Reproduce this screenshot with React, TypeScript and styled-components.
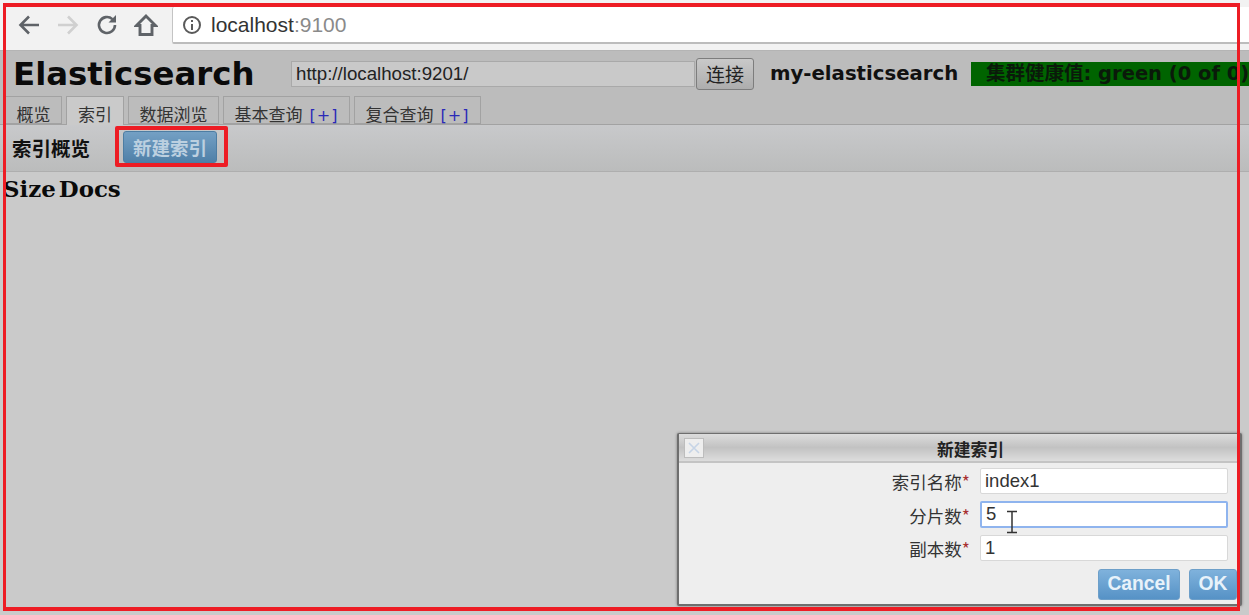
import React from 'react';
import styled, { createGlobalStyle } from 'styled-components';

const GlobalStyle = createGlobalStyle`
    html, body {
        margin: 0;
        padding: 0;
        height: 615px;
        overflow: hidden;
        background: #cacaca;
        font-family: "DejaVu Sans", "Noto Sans CJK SC", sans-serif;
    }
`;

const tabs = [
    { label: '概览', width: 57 },
    { label: '索引', width: 58, active: true },
    { label: '数据浏览', width: 91 },
    { label: '基本查询', width: 127, plus: true },
    { label: '复合查询', width: 127, plus: true },
];

const fields = [
    { label: '索引名称', value: 'index1' },
    { label: '分片数', value: '5', focused: true },
    { label: '副本数', value: '1' },
];

export default function App() {
    return (
        <Screen>
            <GlobalStyle />
            <BrowserBar>
                <NavIcons>
                    <svg width="24" height="24" viewBox="0 0 24 24" fill="none" stroke="#5f6368" strokeWidth="2.6">
                        <path d="M22 12H4M12 3.5L3.5 12l8.5 8.5" />
                    </svg>
                    <svg width="24" height="24" viewBox="0 0 24 24" fill="none" stroke="#d0d0d0" strokeWidth="2.6">
                        <path d="M2 12h18M12 3.5l8.5 8.5-8.5 8.5" />
                    </svg>
                    <svg width="24" height="24" viewBox="0 0 24 24" fill="none" stroke="#5f6368" strokeWidth="2.6">
                        <path d="M20 12a8 8 0 1 1-2.6-5.9" />
                        <path d="M21 2v7.5h-7.5z" fill="#5f6368" stroke="none" />
                    </svg>
                    <svg width="24" height="24" viewBox="0 0 24 24" fill="none" stroke="#5f6368" strokeWidth="2.9">
                        <path d="M2.5 12.5L12 3l9.5 9.5h-3.5v9H6v-9z" />
                    </svg>
                </NavIcons>
                <AddressBox>
                    <svg width="20" height="20" viewBox="0 0 20 20" fill="none" stroke="#5a5a5a" strokeWidth="2">
                        <circle cx="10" cy="10" r="8" />
                        <path d="M10 9v6M10 5v2" />
                    </svg>
                    <AddressText>localhost<AddressPort>:9100</AddressPort></AddressText>
                </AddressBox>
            </BrowserBar>
            <Page>
                <Header>
                    <Title>Elasticsearch</Title>
                    <UrlInput readOnly value="http://localhost:9201/" />
                    <ConnectButton>连接</ConnectButton>
                    <ClusterName>my-elasticsearch</ClusterName>
                    <HealthBadge>集群健康值: green (0 of 0)</HealthBadge>
                </Header>
                <TabRow>
                    {tabs.map((tab) => (
                        <Tab key={tab.label} $active={tab.active} $width={tab.width}>
                            {tab.label}
                            {tab.plus && <PlusMark>[+]</PlusMark>}
                        </Tab>
                    ))}
                </TabRow>
                <Toolbar>
                    <ToolbarLabel>索引概览</ToolbarLabel>
                    <BlueButton>新建索引</BlueButton>
                    <ButtonOutline />
                </Toolbar>
                <Stats>
                    <span>Size</span>
                    <span>Docs</span>
                </Stats>
            </Page>
            <Dialog>
                <DialogTitleBar>
                    <CloseBox>
                        <svg width="14" height="14" viewBox="0 0 14 14" fill="none" stroke="#c6d4e6" strokeWidth="1.6">
                            <path d="M2 2l10 10M12 2L2 12" />
                        </svg>
                    </CloseBox>
                    新建索引
                </DialogTitleBar>
                <DialogBody>
                    {fields.map((field) => (
                        <FieldRow key={field.label}>
                            <FieldLabel>{field.label}<Required>*</Required></FieldLabel>
                            <FieldInput readOnly value={field.value} $focused={field.focused} />
                        </FieldRow>
                    ))}
                    <DialogActions>
                        <DialogButton $width={82}>Cancel</DialogButton>
                        <DialogButton $width={48}>OK</DialogButton>
                    </DialogActions>
                </DialogBody>
                <TextCursor width="14" height="24" viewBox="0 0 14 24" fill="none" stroke="#333" strokeWidth="1.5">
                    <path d="M2 1.5h10M7 1.5v21M2 22.5h10" />
                </TextCursor>
            </Dialog>
            <ScreenOutline />
        </Screen>
    );
}

const Screen = styled.div`
    position: relative;
    width: 1249px;
    height: 615px;
    overflow: hidden;
`;

const BrowserBar = styled.div`
    display: flex;
    align-items: flex-start;
    box-sizing: border-box;
    height: 51px;
    padding-top: 7px;
    background: #f2f2f2;
    border-bottom: 1px solid #b4b4b4;
`;

const NavIcons = styled.div`
    display: flex;
    gap: 15px;
    width: 172px;
    padding: 6px 0 0 17px;
    box-sizing: border-box;
`;

const AddressBox = styled.div`
    flex: 1;
    display: flex;
    align-items: center;
    gap: 9px;
    height: 37px;
    box-sizing: border-box;
    padding-left: 9px;
    background: #fff;
    border-left: 1px solid #c4c4c4;
    border-bottom: 2px solid #bcbcbc;
    border-radius: 2px 0 0 2px;
`;

const AddressText = styled.span`
    font-family: "Liberation Sans", sans-serif;
    font-size: 21px;
    color: #333;
`;

const AddressPort = styled.span`
    color: #8a8a8a;
`;

const Page = styled.div`
    display: flex;
    flex-direction: column;
`;

const Header = styled.div`
    display: flex;
    align-items: center;
    height: 45px;
    padding-left: 13px;
    background: #bcbcbc;
`;

const Title = styled.div`
    width: 278px;
    font-size: 32.4px;
    font-weight: bold;
    color: #0a0a0a;
    white-space: nowrap;
`;

const UrlInput = styled.input`
    box-sizing: border-box;
    width: 404px;
    height: 26px;
    padding: 0 4px;
    background: #c9c9c9;
    border: 1px solid #a9a9a9;
    font-family: "Liberation Sans", sans-serif;
    font-size: 18.7px;
    color: #222;
    outline: none;
`;

const ConnectButton = styled.button`
    box-sizing: border-box;
    width: 58px;
    height: 32px;
    margin-left: 1px;
    padding: 0;
    background: linear-gradient(#c9c9c9, #adadad);
    border: 1px solid #7d7d7d;
    border-radius: 3px;
    font-family: "Noto Sans CJK SC", sans-serif;
    font-size: 19px;
    color: #222;
`;

const ClusterName = styled.div`
    width: 201px;
    margin-left: 16px;
    font-size: 19.7px;
    font-weight: bold;
    color: #111;
    white-space: nowrap;
`;

const HealthBadge = styled.div`
    flex: 1;
    height: 24px;
    padding-left: 15px;
    background: #006400;
    font-family: "DejaVu Sans", "Noto Sans CJK SC", sans-serif;
    font-size: 19.5px;
    font-weight: bold;
    line-height: 23px;
    color: #0a1a0a;
    white-space: nowrap;
    overflow: hidden;
`;

const TabRow = styled.div`
    display: flex;
    align-items: flex-end;
    gap: 4px;
    height: 28px;
    padding-left: 5px;
    background: #bcbcbc;
    border-bottom: 1px solid #a2a2a2;
`;

const Tab = styled.div<{ $active?: boolean; $width: number }>`
    box-sizing: border-box;
    width: ${(p) => p.$width}px;
    height: ${(p) => (p.$active ? 29 : 28)}px;
    margin-bottom: ${(p) => (p.$active ? -1 : 0)}px;
    padding-top: 8px;
    background: ${(p) => (p.$active ? '#cacaca' : '#bcbcbc')};
    border: 1px solid #a2a2a2;
    border-bottom: ${(p) => (p.$active ? 'none' : '1px solid #a2a2a2')};
    font-family: "Noto Sans CJK SC", sans-serif;
    font-size: 17px;
    line-height: 18px;
    color: #333;
    text-align: center;
    white-space: nowrap;
`;

const PlusMark = styled.span`
    margin-left: 7px;
    font-family: "DejaVu Sans", sans-serif;
    font-size: 16px;
    letter-spacing: 1px;
    color: #2a2ab8;
`;

const Toolbar = styled.div`
    position: relative;
    display: flex;
    align-items: center;
    gap: 33px;
    height: 47px;
    box-sizing: border-box;
    padding: 0 0 2px 12px;
    background: linear-gradient(#c8c9cb, #bbbcbc);
    border-bottom: 1px solid #aeaeae;
`;

const ToolbarLabel = styled.div`
    font-family: "Noto Sans CJK SC", sans-serif;
    font-size: 19.5px;
    font-weight: bold;
    color: #111;
`;

const BlueButton = styled.button`
    box-sizing: border-box;
    width: 94px;
    height: 32px;
    padding: 0;
    background: linear-gradient(#74a0c4, #4f80a8);
    border: 1px solid #4d7da3;
    border-radius: 3px;
    font-family: "Noto Sans CJK SC", sans-serif;
    font-size: 18.5px;
    font-weight: bold;
    color: #bcd0e0;
`;

const ButtonOutline = styled.div`
    position: absolute;
    left: 115px;
    top: 1px;
    width: 113px;
    height: 41px;
    box-sizing: border-box;
    border: 4px solid #ed1c24;
    border-radius: 2px;
`;

const Stats = styled.div`
    display: flex;
    gap: 3px;
    padding: 3px 0 0 3px;
    font-family: "DejaVu Serif", serif;
    font-size: 22.9px;
    font-weight: bold;
    color: #0a0a0a;
`;

const Dialog = styled.div`
    position: absolute;
    left: 677px;
    top: 433px;
    width: 565px;
    height: 173px;
    box-sizing: border-box;
    background: #eeeeee;
    border: 2px solid #6e6e6e;
    border-top-width: 1px;
    border-radius: 2px;
    box-shadow: 0 0 3px rgba(0, 0, 0, 0.4);
`;

const DialogTitleBar = styled.div`
    position: relative;
    height: 27px;
    padding-left: 22px;
    background: linear-gradient(#dcdcdc, #c2c2c2 50%, #dddddd);
    border-bottom: 2px solid #c4c4c4;
    font-family: "Noto Sans CJK SC", sans-serif;
    font-size: 16.8px;
    font-weight: bold;
    line-height: 30px;
    color: #222;
    text-align: center;
`;

const CloseBox = styled.div`
    position: absolute;
    left: 5px;
    top: 4px;
    display: flex;
    align-items: center;
    justify-content: center;
    width: 18px;
    height: 18px;
    background: #eeeeee;
    border: 1px solid #bdbdbd;
`;

const DialogBody = styled.div`
    display: flex;
    flex-direction: column;
    gap: 6.5px;
    padding-top: 4px;
`;

const FieldRow = styled.div`
    display: flex;
    align-items: center;
    height: 27px;
`;

const FieldLabel = styled.div`
    width: 291px;
    padding-top: 3px;
    font-family: "Noto Sans CJK SC", sans-serif;
    font-size: 17.5px;
    line-height: 24px;
    color: #333;
    text-align: right;
`;

const Required = styled.span`
    color: #a83030;
`;

const FieldInput = styled.input<{ $focused?: boolean }>`
    box-sizing: border-box;
    width: 248px;
    height: ${(p) => (p.$focused ? 27 : 26)}px;
    margin-left: 10px;
    padding: 0 4px;
    background: #fff;
    border: ${(p) => (p.$focused ? '2px solid #8fb4ee' : '1px solid #d8d8d8')};
    border-radius: 2px;
    font-family: "Liberation Sans", sans-serif;
    font-size: 18.5px;
    color: #333;
    outline: none;
`;

const DialogActions = styled.div`
    display: flex;
    justify-content: flex-end;
    gap: 9px;
    margin-top: 1px;
    padding-right: 3px;
`;

const DialogButton = styled.button<{ $width: number }>`
    box-sizing: border-box;
    width: ${(p) => p.$width}px;
    height: 31px;
    padding: 0;
    background: linear-gradient(#7fb2dc, #5692c6);
    border: 1px solid #6d9fc9;
    border-radius: 3px;
    font-family: "Liberation Sans", sans-serif;
    font-size: 19.3px;
    font-weight: bold;
    color: #e8f2fa;
`;

const TextCursor = styled.svg`
    position: absolute;
    left: 326px;
    top: 76px;
`;

const ScreenOutline = styled.div`
    position: absolute;
    left: 3px;
    top: 3px;
    width: 1237px;
    height: 608px;
    box-sizing: border-box;
    border-style: solid;
    border-color: #ed1c24;
    border-width: 4px 3px;
    pointer-events: none;
`;
